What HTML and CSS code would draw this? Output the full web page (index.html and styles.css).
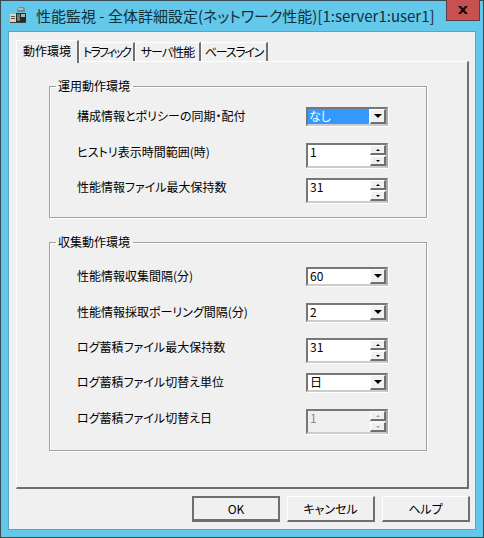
FILE: index.html
```html
<!DOCTYPE html>
<html lang="ja">
<head>
<meta charset="utf-8">
<title>性能監視</title>
<link rel="stylesheet" href="styles.css">
</head>
<body>
<div class="window">
  <header class="titlebar">
    <svg class="app-icon" width="18" height="18" viewBox="0 0 18 18">
      <path d="M8 2.500 11 1h4l1 1.500V6H8z" fill="#7f8a86"/>
      <rect x="9" y="2" width="5" height="2" fill="#b4bcb8"/>
      <rect x="7" y="7" width="10" height="9" fill="#23282a"/>
      <rect x="8" y="8" width="3" height="7" fill="#6d7a78"/>
      <rect x="12" y="8" width="4" height="3" fill="#aab4b0"/>
      <rect x="1" y="8" width="6" height="8" fill="#d8d6c8"/>
      <rect x="2" y="10" width="4" height="1" fill="#55554d"/>
      <rect x="2" y="12" width="4" height="1" fill="#55554d"/>
      <rect x="1" y="16" width="16" height="1" fill="#3c4034"/>
    </svg>
    <h1 class="title">性能監視 - 全体詳細設定(ネットワーク性能)[1:server1:user1]</h1>
    <div class="close"><svg width="10" height="8" viewBox="0 0 10 8"><path d="M0 0h3l2 2.200L7 0h3L6.600 4 10 8H7L5 5.800 3 8H0l3.400-4z" fill="#111"/></svg></div>
  </header>
  <div class="client">
    <div class="tabs">
      <div class="tab active">動作環境</div>
      <div class="tab t2">トラフィック</div>
      <div class="tab t3">サーバ性能</div>
      <div class="tab t4">ベースライン</div>
    </div>
    <div class="panel">
      <fieldset class="group g1">
        <legend>運用動作環境</legend>
        <div class="row combo-row">
          <span class="label">構成情報とポリシーの同期・配付</span>
          <div class="combo"><span class="value selected">なし</span><span class="drop"><i></i></span></div>
        </div>
        <div class="row">
          <span class="label">ヒストリ表示時間範囲(時)</span>
          <div class="spin"><span class="value">1</span><span class="arrows"><b><i class="up"></i></b><b><i class="down"></i></b></span></div>
        </div>
        <div class="row">
          <span class="label">性能情報ファイル最大保持数</span>
          <div class="spin"><span class="value">31</span><span class="arrows"><b><i class="up"></i></b><b><i class="down"></i></b></span></div>
        </div>
      </fieldset>
      <fieldset class="group g2">
        <legend>収集動作環境</legend>
        <div class="row combo-row">
          <span class="label">性能情報収集間隔(分)</span>
          <div class="combo"><span class="value">60</span><span class="drop"><i></i></span></div>
        </div>
        <div class="row combo-row tight">
          <span class="label">性能情報採取ポーリング間隔(分)</span>
          <div class="combo"><span class="value">2</span><span class="drop"><i></i></span></div>
        </div>
        <div class="row">
          <span class="label">ログ蓄積ファイル最大保持数</span>
          <div class="spin"><span class="value">31</span><span class="arrows"><b><i class="up"></i></b><b><i class="down"></i></b></span></div>
        </div>
        <div class="row combo-row">
          <span class="label">ログ蓄積ファイル切替え単位</span>
          <div class="combo"><span class="value">日</span><span class="drop"><i></i></span></div>
        </div>
        <div class="row">
          <span class="label">ログ蓄積ファイル切替え日</span>
          <div class="spin disabled"><span class="value">1</span><span class="arrows"><b><i class="up"></i></b><b><i class="down"></i></b></span></div>
        </div>
      </fieldset>
    </div>
    <div class="buttons">
      <button class="btn default">OK</button>
      <button class="btn">キャンセル</button>
      <button class="btn">ヘルプ</button>
    </div>
  </div>
</div>
</body>
</html>
```
FILE: styles.css
```css
* { box-sizing: border-box; }
html, body { margin: 0; padding: 0; }
body {
  width: 484px;
  height: 538px;
  overflow: hidden;
  font-family: "Noto Sans CJK JP", "Noto Sans", sans-serif;
  font-feature-settings: "palt";
  font-size: 12px;
  color: #000;
}
.window {
  width: 484px;
  height: 538px;
  background: #63c8ea;
  border: 1px solid #3a4a52;
  padding: 0 7px 7px;
  display: flex;
  flex-direction: column;
}
.titlebar {
  height: 30px;
  flex: none;
  display: flex;
  align-items: flex-start;
  position: relative;
}
.app-icon { margin: 5px 0 0 1px; flex: none; }
.title {
  margin: 5px 0 0 9px;
  font-size: 15px;
  font-weight: 400;
  line-height: 20px;
  color: #10303a;
  white-space: nowrap;
}
.close {
  position: absolute;
  top: -1px;
  right: -4px;
  width: 34px;
  height: 21px;
  background: #c75050;
  border: 1px solid #5a4040;
  border-top: 0;
  display: flex;
  align-items: center;
  justify-content: center;
}
.client {
  flex: 1;
  background: #f0f0f0;
  border: 1px solid #5fa3bd;
  padding: 8px 7px 0;
  display: flex;
  flex-direction: column;
}
.tabs {
  display: flex;
  height: 21px;
  flex: none;
  position: relative;
  z-index: 1;
}
.tab {
  height: 19px;
  margin-top: 2px;
  background: #f0f0f0;
  border: 1px solid #fff;
  border-right: 2px solid #6f6f6f;
  border-bottom: 0;
  text-align: center;
  line-height: 18px;
  white-space: nowrap;
}
.tab.active {
  height: 23px;
  margin-top: 0;
  width: 63px;
  line-height: 19px;
}
.t2 { width: 56px; letter-spacing: -2px; }
.t3 { width: 66px; letter-spacing: -1px; }
.t4 { width: 67px; letter-spacing: -1.3px; }
.panel {
  width: 453px;
  height: 428px;
  flex: none;
  border: 1px solid #fff;
  border-right: 2px solid #6f6f6f;
  border-bottom: 2px solid #6f6f6f;
  padding: 17px 0 0 32px;
  background: #f0f0f0;
}
.group {
  width: 378px;
  margin: 0;
  padding: 14px 0 0 0;
  border: 1px solid #a0a0a0;
  box-shadow: 1px 1px 0 #fff, inset 1px 1px 0 #fff;
  display: flex;
  flex-direction: column;
  gap: 9px;
}
.g1 { height: 139px; }
.g2 { height: 216px; margin-top: 17px; padding-top: 18px; }
.group legend {
  margin-left: 6px;
  padding: 0 3px 0 2px;
  line-height: 14px;
}
.row {
  display: flex;
  align-items: flex-start;
  width: 338px;
  height: 26px;
  flex: none;
  margin-left: 27px;
}
.combo-row { height: 19px; margin-bottom: 8px; }
.tight { margin-bottom: 7px; }
.label {
  width: 229px;
  flex: none;
  line-height: 17px;
  white-space: nowrap;
}
.combo, .spin {
  width: 82px;
  flex: none;
  background: #fff;
  border: 2px solid #777;
  border-right-color: #aaa;
  border-bottom-color: #ccc;
  box-shadow: 1px 1px 0 #fff;
  display: flex;
}
.combo { height: 19px; }
.spin { height: 25px; }
.value { flex: 1; padding-left: 2px; line-height: 14px; }
.selected { background: #3399ff; color: #fff; margin-right: 1px; padding-left: 1px; }
.drop {
  width: 16px;
  background: #f0f0f0;
  border: 1px solid #fff;
  border-right: 2px solid #6f6f6f;
  border-bottom: 2px solid #6f6f6f;
  display: flex;
  align-items: center;
  justify-content: center;
}
.drop i {
  width: 0; height: 0;
  border-left: 4px solid transparent;
  border-right: 4px solid transparent;
  border-top: 4px solid #000;
}
.arrows {
  width: 16px;
  display: flex;
  flex-direction: column;
  gap: 1px;
}
.arrows b {
  flex: 1;
  background: #f0f0f0;
  border: 1px solid #fff;
  border-right: 2px solid #6f6f6f;
  border-bottom: 2px solid #6f6f6f;
  display: flex;
  align-items: center;
  justify-content: center;
}
.arrows i { width: 0; height: 0; border-left: 2px solid transparent; border-right: 2px solid transparent; }
.up { border-bottom: 2px solid #000; }
.down { border-top: 2px solid #000; }
.disabled { background: #f0f0f0; }
.disabled .value { color: #8a8a8a; }
.disabled .up { border-bottom-color: #a0a0a0; }
.disabled .down { border-top-color: #a0a0a0; }
.buttons {
  display: flex;
  justify-content: flex-end;
  gap: 7px;
  padding-top: 7px;
  width: 454px;
}
.btn {
  width: 88px;
  height: 26px;
  padding: 0;
  background: #f0f0f0;
  border: 1px solid #fff;
  border-right: 2px solid #6f6f6f;
  border-bottom: 2px solid #6f6f6f;
  font: inherit;
  font-feature-settings: "palt";
  color: #000;
}
.default { border: 2px solid #6f6f6f; border-bottom-width: 3px; }
```
